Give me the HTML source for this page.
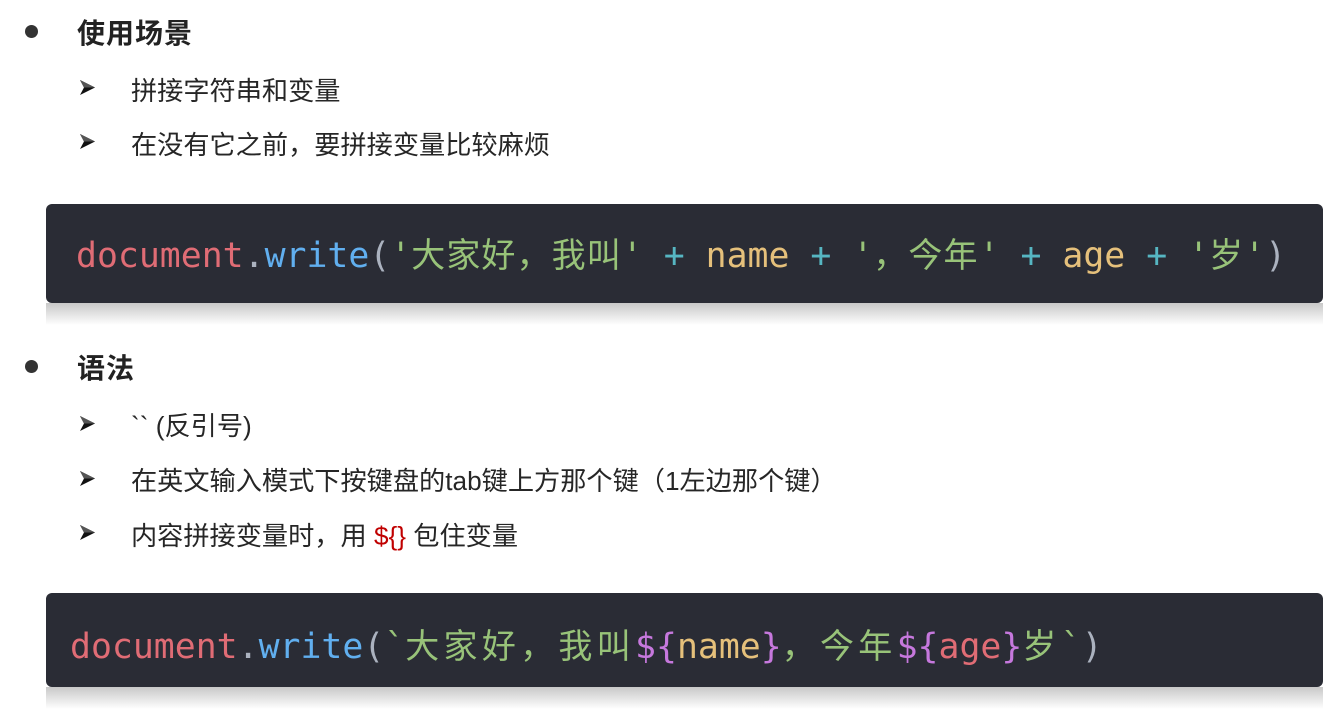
<!DOCTYPE html>
<html><head><meta charset="utf-8"><style>
body{margin:0;width:1328px;height:711px;background:#fff;position:relative;overflow:hidden;font-family:"Liberation Sans","Noto Sans CJK SC",sans-serif;color:#222}
.a{position:absolute;white-space:nowrap}
.dot{position:absolute;width:13px;height:13px;border-radius:50%;background:#333}
.h{font-size:28px;font-weight:bold;letter-spacing:1px}
.t{font-size:26.2px;color:#262626}
.arr{position:absolute;width:17px;height:17px}
.box{position:absolute;left:46px;width:1277px;background:#2a2c35;border-radius:6px}
.ref{position:absolute;left:46px;width:1277px;height:22px;background:linear-gradient(#c8c8c8,#fff)}
.code{position:absolute;white-space:nowrap;font-family:"DejaVu Sans Mono","Liberation Mono","Noto Sans CJK SC",monospace;font-size:34.8px;color:#abb2bf}
.r{color:#e06c75}.b{color:#61afef}.g{color:#98c379}.c{color:#56b6c2}.y{color:#e5c07b}.p{color:#c678dd}
.cj{font-family:"Noto Sans CJK SC",sans-serif;font-size:34px;letter-spacing:1.1px}
.cj2{font-family:"Noto Sans CJK SC",sans-serif;font-size:34px;letter-spacing:4.3px}
</style></head><body>
<svg width="0" height="0" style="position:absolute"><defs><symbol id="ar" viewBox="0 0 17 17"><path d="M1 1 L16 8.5 L1 16 L5 8.5 Z" fill="#111"/><path d="M1 1 L16 8.5 L5 8.5 Z" fill="#555"/></symbol></defs></svg>
<div class="dot" style="left:25px;top:25px"></div>
<div class="a h" style="left:77px;top:12px">使用场景</div>
<svg class="arr" style="left:79px;top:79px"><use href="#ar"/></svg>
<div class="a t" style="left:131px;top:70px">拼接字符串和变量</div>
<svg class="arr" style="left:79px;top:133px"><use href="#ar"/></svg>
<div class="a t" style="left:131px;top:124px">在没有它之前，要拼接变量比较麻烦</div>

<div class="ref" style="top:303px"></div>
<div class="box" style="top:204px;height:99px"></div>
<div class="code" style="left:76px;top:228px"><span class="r">document</span>.<span class="b">write</span>(<span class="g">'<span class="cj">大家好，我叫</span>'</span> <span class="c">+</span> <span class="y">name</span> <span class="c">+</span> <span class="g">'<span class="cj">，今年</span>'</span> <span class="c">+</span> <span class="y">age</span> <span class="c">+</span> <span class="g">'<span class="cj">岁</span>'</span>)</div>

<div class="dot" style="left:25px;top:360px"></div>
<div class="a h" style="left:77px;top:347px">语法</div>
<svg class="arr" style="left:79px;top:415px"><use href="#ar"/></svg>
<div class="a t" style="left:131px;top:405px">`` (反引号)</div>
<svg class="arr" style="left:79px;top:470px"><use href="#ar"/></svg>
<div class="a t" style="left:131px;top:460px">在英文输入模式下按键盘的tab键上方那个键（1左边那个键）</div>
<svg class="arr" style="left:79px;top:524px"><use href="#ar"/></svg>
<div class="a t" style="left:131px;top:515px">内容拼接变量时，用 <span style="color:#c00000">${}</span> 包住变量</div>

<div class="ref" style="top:687px"></div>
<div class="box" style="top:593px;height:94px"></div>
<div class="code" style="left:70px;top:619px"><span class="r">document</span>.<span class="b">write</span>(<span class="g">`<span class="cj2">大家好，我叫</span></span><span class="p">${</span><span class="y">name</span><span class="p">}</span><span class="g"><span class="cj2">，今年</span></span><span class="p">${</span><span class="r">age</span><span class="p">}</span><span class="g"><span class="cj2">岁</span>`</span>)</div>
</body></html>
